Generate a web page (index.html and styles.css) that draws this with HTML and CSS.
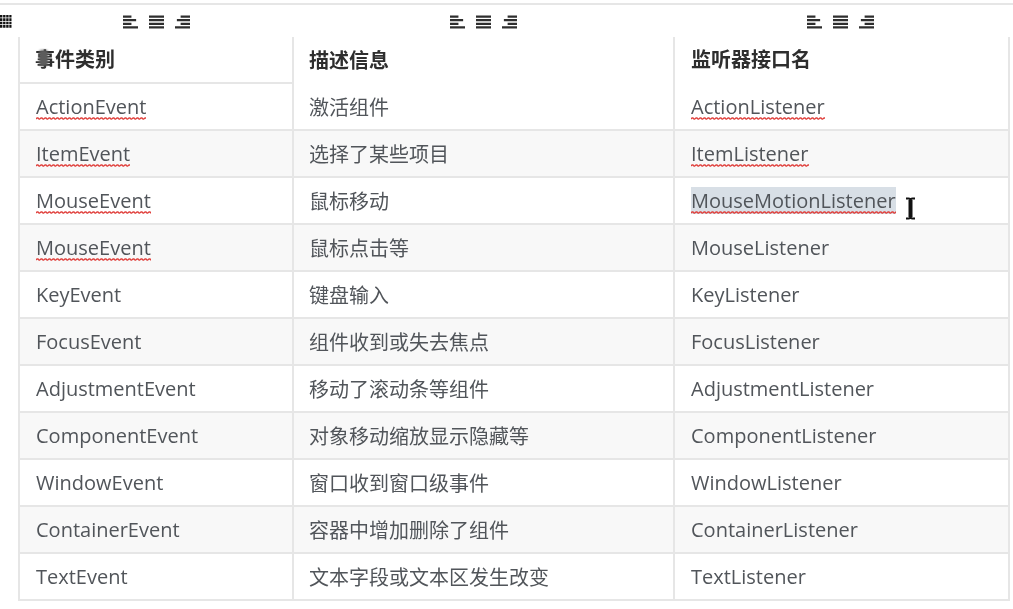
FILE: index.html
```html
<!DOCTYPE html>
<html lang="zh">
<head>
<meta charset="utf-8">
<title>事件类别</title>
<link rel="stylesheet" href="styles.css">
</head>
<body>
<svg class="defs" width="0" height="0" aria-hidden="true">
  <symbol id="al" viewBox="0 0 16 14"><path d="M0 1.200h9M0 5h14M0 9h9M0 12.800h16"/></symbol>
  <symbol id="ac" viewBox="0 0 16 14"><path d="M0 1.200h16M0 5h16M0 9h16M0 12.800h16"/></symbol>
  <symbol id="ar" viewBox="0 0 16 14"><path d="M6 1.200h10M2 5h14M6 9h10M0 12.800h16"/></symbol>
</svg>
<div class="topline"></div>
<div class="toolbar">
  <svg class="handle" viewBox="0 0 12 14" aria-hidden="true"><path d="M0 2.200h11.500M0 5.600h11.500M0 9h11.500M0 12.400h11.500"/></svg>
  <div class="tools t1"><svg><use href="#al"/></svg><svg><use href="#ac"/></svg><svg><use href="#ar"/></svg></div>
  <div class="tools t2"><svg><use href="#al"/></svg><svg><use href="#ac"/></svg><svg><use href="#ar"/></svg></div>
  <div class="tools t3"><svg><use href="#al"/></svg><svg><use href="#ac"/></svg><svg><use href="#ar"/></svg></div>
</div>
<table class="events">
  <colgroup><col class="c1"><col class="c2"><col class="c3"></colgroup>
  <thead>
    <tr><th class="mark-cell">事件类别<span class="smudge"></span></th><th>描述信息</th><th>监听器接口名</th></tr>
  </thead>
  <tbody>
    <tr><td><span class="sp">ActionEvent</span></td><td>激活组件</td><td><span class="sp">ActionListener</span></td></tr>
    <tr><td><span class="sp">ItemEvent</span></td><td>选择了某些项目</td><td><span class="sp">ItemListener</span></td></tr>
    <tr><td><span class="sp">MouseEvent</span></td><td>鼠标移动</td><td class="cursor-cell"><span class="sp sel">MouseMotionListener</span><svg class="ibeam" viewBox="0 0 11 23" aria-hidden="true"><path d="M1 1.500h2.500c1.500 0 2 1 2 2v16c0 1-.5 2-2 2H1M10 1.500H7.500c-1.500 0-2 1-2 2v16c0 1 .5 2 2 2H10"/><path class="stem" d="M5.500 3v17"/></svg></td></tr>
    <tr><td><span class="sp">MouseEvent</span></td><td>鼠标点击等</td><td>MouseListener</td></tr>
    <tr><td>KeyEvent</td><td>键盘输入</td><td>KeyListener</td></tr>
    <tr><td>FocusEvent</td><td>组件收到或失去焦点</td><td>FocusListener</td></tr>
    <tr><td>AdjustmentEvent</td><td>移动了滚动条等组件</td><td>AdjustmentListener</td></tr>
    <tr><td>ComponentEvent</td><td>对象移动缩放显示隐藏等</td><td>ComponentListener</td></tr>
    <tr><td>WindowEvent</td><td>窗口收到窗口级事件</td><td>WindowListener</td></tr>
    <tr><td>ContainerEvent</td><td>容器中增加删除了组件</td><td>ContainerListener</td></tr>
    <tr><td>TextEvent</td><td>文本字段或文本区发生改变</td><td>TextListener</td></tr>
  </tbody>
</table>
</body>
</html>
```
FILE: styles.css
```css
html, body {
  margin: 0;
  padding: 0;
  background: #fff;
  overflow: hidden;
}
body {
  font-family: "Open Sans", "Noto Sans CJK SC", sans-serif;
  color: #51555a;
  height: 609px;
  filter: blur(0.4px);
}
.defs { position: absolute; }
.topline {
  height: 2px;
  margin-top: 3px;
  background: #e6e6e6;
}
.toolbar {
  position: relative;
  height: 32px;
}
.handle {
  position: absolute;
  left: 0;
  top: 9px;
  width: 12px;
  height: 14px;
  fill: none;
  stroke: #111;
  stroke-width: 2.600;
  stroke-dasharray: 2.400 .7;
}
.tools {
  position: absolute;
  top: 10px;
  display: flex;
  gap: 11px;
}
.tools svg {
  width: 15px;
  height: 14px;
  fill: none;
  stroke: #2e2e2e;
  stroke-width: 2.300;
}
.t1 { left: 123px; }
.t2 { left: 450px; }
.t3 { left: 807px; }
.events {
  border-collapse: collapse;
  table-layout: fixed;
  width: 990px;
  margin-left: 18px;
  font-size: 20px;
  line-height: 27px;
}
.c1 { width: 274px; }
.c2 { width: 381px; }
.c3 { width: 335px; }
.events th, .events td {
  box-sizing: border-box;
  height: 47px;
  padding: 0 16px;
  border: 2px solid #e6e6e6;
  text-align: left;
  white-space: nowrap;
}
.events td:nth-child(2), .events th:nth-child(2) {
  padding-left: 15px;
  padding-top: 2px;
}
.events thead th {
  height: 46px;
  border-top: 0;
  font-weight: 700;
  color: #2e2e2e;
}
.events thead th:nth-child(1) { padding-left: 15px; }
.events thead th:nth-child(2),
.events thead th:nth-child(3) { border-bottom-color: transparent; }
.events tbody tr:nth-child(even) td { background: #f8f8f8; }
.sp {
  background-image: url("data:image/svg+xml,%3Csvg xmlns='http://www.w3.org/2000/svg' width='4' height='3'%3E%3Cpath d='M0 2 L1 1 L2 1 L3 2 L4 2' fill='none' stroke='%23e0403c' stroke-width='1.300'/%3E%3C/svg%3E");
  background-repeat: repeat-x;
  background-position: left bottom;
  background-size: 4px 3px;
}
.sel { background-color: #d8dfe6; }
.cursor-cell { position: relative; }
.mark-cell { position: relative; }
.smudge {
  position: absolute;
  left: 19px;
  top: 13px;
  width: 9px;
  height: 16px;
  border-radius: 3px;
  background: #5c5c5c;
  filter: blur(1px);
}
.ibeam {
  position: absolute;
  left: 230px;
  top: 19px;
  width: 11px;
  height: 23px;
  fill: none;
  stroke: #111;
  stroke-width: 2;
}
.ibeam .stem { stroke-width: 4; }
```
